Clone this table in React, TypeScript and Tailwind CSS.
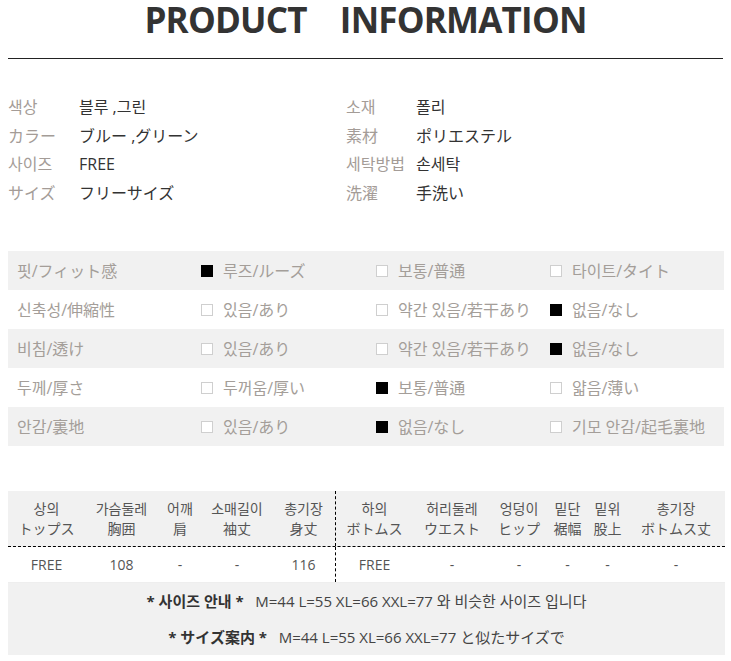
import React from "react";

const info = [
  ["색상", "블루 ,그린", "소재", "폴리"],
  ["カラー", "ブルー ,グリーン", "素材", "ポリエステル"],
  ["사이즈", "FREE", "세탁방법", "손세탁"],
  ["サイズ", "フリーサイズ", "洗濯", "手洗い"],
];

type Opt = [string, boolean];
const fit: { label: string; opts: Opt[] }[] = [
  { label: "핏/フィット感", opts: [["루즈/ルーズ", true], ["보통/普通", false], ["타이트/タイト", false]] },
  { label: "신축성/伸縮性", opts: [["있음/あり", false], ["약간 있음/若干あり", false], ["없음/なし", true]] },
  { label: "비침/透け", opts: [["있음/あり", false], ["약간 있음/若干あり", false], ["없음/なし", true]] },
  { label: "두께/厚さ", opts: [["두꺼움/厚い", false], ["보통/普通", true], ["얇음/薄い", false]] },
  { label: "안감/裏地", opts: [["있음/あり", false], ["없음/なし", true], ["기모 안감/起毛裏地", false]] },
];

const head: [string, string][] = [
  ["상의", "トップス"],
  ["가슴둘레", "胸囲"],
  ["어깨", "肩"],
  ["소매길이", "袖丈"],
  ["총기장", "身丈"],
  ["하의", "ボトムス"],
  ["허리둘레", "ウエスト"],
  ["엉덩이", "ヒップ"],
  ["밑단", "裾幅"],
  ["밑위", "股上"],
  ["총기장", "ボトムス丈"],
];
const data = ["FREE", "108", "-", "-", "116", "FREE", "-", "-", "-", "-", "-"];

const cols =
  "grid grid-cols-[77px_73px_44px_70px_63px_78px_78px_56px_41px_39px_1fr]";

export default function App() {
  return (
    <div className="w-[731px] h-[661px] bg-white font-['Open_Sans','Noto_Sans_CJK_KR',sans-serif] overflow-hidden">
      {/* Title */}
      <div className="h-[58px] flex justify-center">
        <h1 className="text-[35px] leading-[40px] font-bold text-[#333] tracking-[-0.8px] whitespace-pre">
          PRODUCT{"    "}INFORMATION
        </h1>
      </div>
      <div className="mx-[8px] h-px bg-[#222]" />

      {/* Info */}
      <div className="mt-[34px] px-[8px]">
        {info.map((r, i) => (
          <div key={i} className="grid grid-cols-[71px_267px_70px_1fr] h-[28.5px] items-center text-[16px] leading-[20px]">
            <span className="text-[#a49c97]">{r[0]}</span>
            <span className="text-[#333]">{r[1]}</span>
            <span className="text-[#a49c97]">{r[2]}</span>
            <span className="text-[#333]">{r[3]}</span>
          </div>
        ))}
      </div>

      {/* Fit table */}
      <div className="mt-[44px] mx-[8px] w-[716px]">
        {fit.map((r, i) => (
          <div
            key={i}
            className={`grid grid-cols-[193px_175px_174px_1fr] h-[39px] items-center text-[16px] leading-[20px] text-[#a49e99] ${
              i % 2 === 0 ? "bg-[#f1f1f1]" : "bg-white"
            }`}
          >
            <span className="pl-[9px]">{r.label}</span>
            {r.opts.map(([t, on], j) => (
              <span key={j} className="flex items-center gap-[10px]">
                <span
                  className={`w-[12px] h-[12px] shrink-0 ${
                    on ? "bg-black" : "border border-[#cfcfcf] bg-white"
                  }`}
                />
                <span className="whitespace-nowrap">{t}</span>
              </span>
            ))}
          </div>
        ))}
      </div>

      {/* Size table */}
      <div className="mt-[45px] mx-[8px] w-[717px] text-[14px] text-[#555]">
        <div className={`${cols} bg-[#f1f1f1] h-[56px] items-center border-b border-dashed border-black`}>
          {head.map(([a, b], i) => (
            <div
              key={i}
              className={`flex flex-col items-center justify-center h-full leading-[20px] ${
                i === 5 ? "border-l border-dashed border-black" : ""
              }`}
            >
              <span>{a}</span>
              <span>{b}</span>
            </div>
          ))}
        </div>
        <div className={`${cols} h-[36px] border-b border-[#eeeeee]`}>
          {data.map((d, i) => (
            <div
              key={i}
              className={`flex items-center justify-center h-full ${
                i === 5 ? "border-l border-dashed border-black" : ""
              }`}
            >
              {d}
            </div>
          ))}
        </div>
        <div className="bg-[#f1f1f1] text-[#444] text-[15px]">
          <div className="h-[36px] flex items-center justify-center whitespace-pre">
            <span className="font-bold text-[#333]">* 사이즈 안내 *</span>
            <span>{"   "}M=44 L=55 XL=66 XXL=77 와 비슷한 사이즈 입니다</span>
          </div>
          <div className="h-[36px] flex items-center justify-center whitespace-pre">
            <span className="font-bold text-[#333]">* サイズ案内 *</span>
            <span>{"   "}M=44 L=55 XL=66 XXL=77 と似たサイズで</span>
          </div>
        </div>
      </div>
    </div>
  );
}
